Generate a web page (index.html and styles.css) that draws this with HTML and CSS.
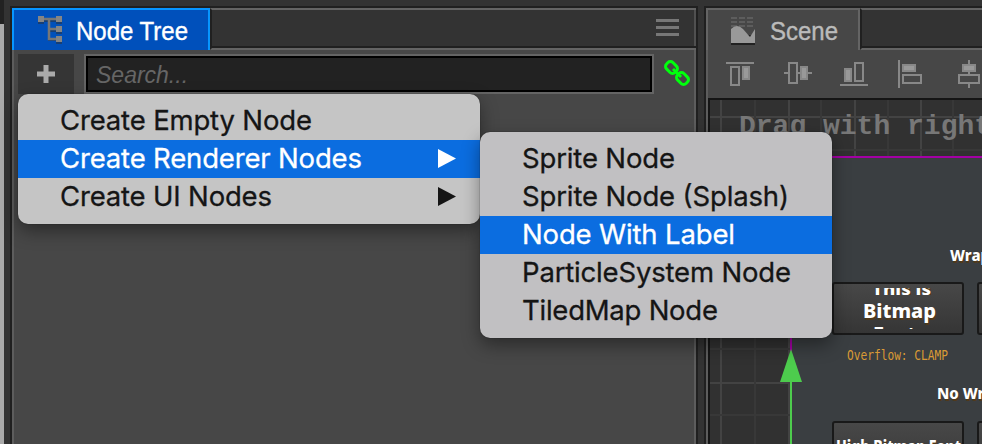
FILE: index.html
```html
<!DOCTYPE html>
<html lang="en"><head><meta charset="utf-8"><title>Node Tree</title><link rel="stylesheet" href="styles.css"></head>
<body>
<div class="app">
<div class="edge"></div>
<section class="panel tree">
 <header class="tabs"><div class="tab active">
 <svg class="tree-icon" width="26" height="30" viewBox="0 0 26 30"><g transform="translate(0 2)" fill="#173f75" stroke="#173f75"><path d="M5 4h15M11 4v19h8M11 14h8" fill="none" stroke-width="2"/><path d="M0 1h6v6H0zM18 1h6v6h-6zM18 11h6v6h-6zM18 21h6v6h-6z" stroke="none"/></g><path d="M5 4h15M11 4v20h8M11 14h8" fill="none" stroke="#777" stroke-width="2.5"/><path d="M0 1h6v6H0zM18 1h6v6h-6zM18 11h6v6h-6zM18 21h6v6h-6z" fill="#858585"/></svg>
 <svg class="t" width="114" height="32"><text x="0" y="26" textLength="112" lengthAdjust="spacingAndGlyphs">Node Tree</text></svg></div>
 <div class="rest"><i class="burger"></i></div></header>
 <div class="search"><button class="add"><svg width="18" height="18"><path d="M9 0v18M0 9h18" stroke="#aaa" stroke-width="5"/></svg></button>
 <div class="input"><span>Search...</span></div>
 <svg class="link" width="28" height="30" viewBox="0 0 28 30"><g fill="none" stroke="#00ff0d" stroke-width="3"><rect x="-6" y="-4.5" width="12" height="9" rx="3.5" transform="translate(7.5 9.5) rotate(45)"/><rect x="-6" y="-4.5" width="12" height="9" rx="3.5" transform="translate(18.5 20.5) rotate(45)"/><path d="M9 11l8 8"/></g></svg></div>
</section>
<section class="panel scene">
 <header class="tabs"><div class="tab">
 <svg class="scene-icon" width="26" height="30" viewBox="0 0 26 30"><path d="M1 3h24M1 7h24M1 11h24" stroke="#5d5d5d" stroke-width="2" stroke-dasharray="6 2"/><path d="M1 30V17H25V30z" fill="#222"/><path d="M1 17V15h24v6z" fill="#474747"/><path d="M1 28V14Q7 8 13 14L20 22 25 14V28z" fill="#999"/></svg>
 <svg class="t" width="70" height="32"><text x="0" y="26" textLength="68" lengthAdjust="spacingAndGlyphs">Scene</text></svg></div><div class="rest"></div></header>
 <div class="tools"><svg width="274" height="48" viewBox="706 50 274 48" fill="none" stroke="#888" stroke-width="2"><path d="M726 63h28M731 67h8v18h-8zM784 73h4M798 73h3M808 73h4M789 63h8v20h-8zM840 85h28M855 63h8v18h-8zM899 60v28M903 75h18v8h-18zM959 75h20v8h-20zM969 60v4M969 72v3M969 84v4"/><path d="M743 67h6v12h-6zM801 67h6v12h-6zM845 69h6v12h-6zM903 65h12v6h-12zM963 65h12v6h-12z" fill="#999"/></svg></div>
 <div class="canvas"><svg width="272" height="344" viewBox="710 100 272 344">
 <path d="M721 100v344M789 100v344M855 100v344M921 100v344M710 117h272M710 383h81" stroke="#434343" stroke-width="2"/><path d="M755 100v344M821 100v57M888 100v57M953 100v57M710 150h272M710 349h81M710 415h81" stroke="#383838" stroke-width="2"/>
 <text class="drag" x="739" y="134">Drag with right</text>
 <rect x="791" y="157" width="210" height="300" fill="#3a3e41" stroke="#a400a5" stroke-width="2"/>
 <defs><linearGradient id="b" x2="0" y2="1"><stop stop-color="#484848"/><stop offset="1" stop-color="#353535"/></linearGradient><clipPath id="c"><path d="M834 288h128v7H834zM834 326h128v3H834z"/></clipPath></defs>
 <g fill="url(#b)" stroke="#191919" stroke-width="2"><rect x="833" y="283" width="130" height="51" rx="2"/><rect x="978" y="283" width="20" height="51" rx="2"/><rect x="833" y="422" width="130" height="60" rx="2"/><rect x="978" y="422" width="20" height="60" rx="2"/></g>
 <g class="game"><text x="950" y="261" font-size="15">Wrap</text><text x="937" y="399" font-size="15">No Wrap</text><text x="863" y="318" font-size="20" textLength="73" lengthAdjust="spacingAndGlyphs">Bitmap</text>
 <g clip-path="url(#c)"><text x="872" y="295" font-size="16" textLength="59" lengthAdjust="spacingAndGlyphs">This is</text><text x="873" y="341" font-size="20" textLength="48">Font,</text></g><text x="836" y="453" font-size="17" textLength="125" lengthAdjust="spacingAndGlyphs">High Bitmap Font</text></g>
 <text class="overflow" x="847" y="360" textLength="101" lengthAdjust="spacingAndGlyphs">Overflow: CLAMP</text>
 <path d="M791 382V444" stroke="#4dcc4d" stroke-width="2"/><path d="M791 349l11 33h-22z" fill="#4dcc4d"/></svg></div>
</section></div>
<nav class="menu main"><div><svg width="380" height="38"><text x="0" y="28" textLength="252">Create Empty Node</text></svg></div><div class="on"><svg width="400" height="38"><text x="0" y="28" textLength="302">Create Renderer Nodes</text><path d="M378 9l18 9.5-18 9.5z"/></svg></div><div><svg width="400" height="38"><text x="0" y="28" textLength="212">Create UI Nodes</text><path d="M378 9l18 9.5-18 9.5z"/></svg></div></nav>
<nav class="menu sub"><div><svg width="290" height="38"><text x="0" y="28" textLength="153">Sprite Node</text></svg></div><div><svg width="290" height="38"><text x="0" y="28" textLength="267">Sprite Node (Splash)</text></svg></div><div class="on"><svg width="290" height="38"><text x="0" y="28" textLength="213">Node With Label</text></svg></div><div><svg width="290" height="38"><text x="0" y="28" textLength="269">ParticleSystem Node</text></svg></div><div><svg width="290" height="38"><text x="0" y="28" textLength="196">TiledMap Node</text></svg></div></nav>
</body></html>
```
FILE: styles.css
```css
*{box-sizing:border-box}
body{margin:0;width:982px;height:444px;overflow:hidden;background:#333;font-family:"Liberation Sans",Arial,sans-serif}
svg{display:block;flex:none}
.app{display:flex;height:444px;padding-top:6px;overflow:hidden}
.edge{flex:none;width:4px;margin:-6px 6px 0 0;background:linear-gradient(#222 24px,#aaa 24px)}
.panel{border:2px solid #202020;border-bottom:0;background:#474747;flex:none}
.tree{width:688px;margin-right:6px;height:438px;box-shadow:inset 2px 0 #5d5d5d,inset -2px 0 #5d5d5d}
.scene{width:300px;box-shadow:inset 2px 0 #5d5d5d}
.tabs{display:flex;height:42px}
.tab{display:flex;align-items:center;width:154px;border:2px solid #646464;border-bottom:0;padding-left:22px;background:#474747}
.tab.active{width:198px;background:#0050bb;border-color:#0795ff;padding-left:24px}
.t{font-size:25px;fill:#bbb;stroke:#bbb;stroke-width:.4px}
.active .t{fill:#fff;stroke:#fff}
.tree-icon,.scene-icon{margin-right:14px}
.tree-icon{margin-right:12px}
.rest{flex:1;display:flex;justify-content:flex-end;background:#333;border-top:2px solid #646464;border-bottom:2px solid #646464;border-left:2px solid #202020;box-shadow:inset 0 -2px #202020,inset -2px 0 #505050}
.burger{width:23px;height:17px;margin:9px 17px 0 0;background:repeating-linear-gradient(#777 0 3px,transparent 3px 7px)}
.search{display:flex;padding:4px 0 0 6px}
.add{width:56px;height:40px;padding:0;border:0;background:#353535;display:flex;align-items:center;justify-content:center;margin-right:10px}
.input{width:570px;height:40px;border:2px solid #646464;background:#222;box-shadow:inset 0 0 0 2px #000;padding:6px 10px;font:italic 23px "Liberation Sans",Arial,sans-serif;line-height:27px;color:#666}
.link{margin:4px 0 0 10px}
.tools{height:48px}
.canvas{border-top:2px solid #151515;border-left:2px solid #151515;margin-left:2px;background:#313131;height:346px}
.drag{font:bold 28px "Liberation Mono",monospace;fill:#777}
.game{font-family:"Noto Sans",sans-serif;font-weight:800;fill:#fff;text-shadow:1px 2px #50391b}
.overflow{font:14px "DejaVu Sans Mono",monospace;fill:#d99a35}
.menu{position:absolute;border-radius:10px;overflow:hidden;box-shadow:0 0 1px #111,0 7px 18px rgba(0,0,0,.4);background:#c5c5c5;font-family:Inter,sans-serif;font-size:27.5px;fill:#151515}
.menu text{stroke:currentColor;stroke-width:.3px;color:#151515}
.menu div{height:38px;padding-left:42px}
.menu .on{background:#0b6de0;fill:#fff}
.menu .on text{color:#fff}
.main{left:18px;top:94px;width:462px;height:130px;padding-top:8px}
.sub{left:480px;top:132px;width:352px;height:206px;padding-top:8px;background:#c1c0c2}
```
